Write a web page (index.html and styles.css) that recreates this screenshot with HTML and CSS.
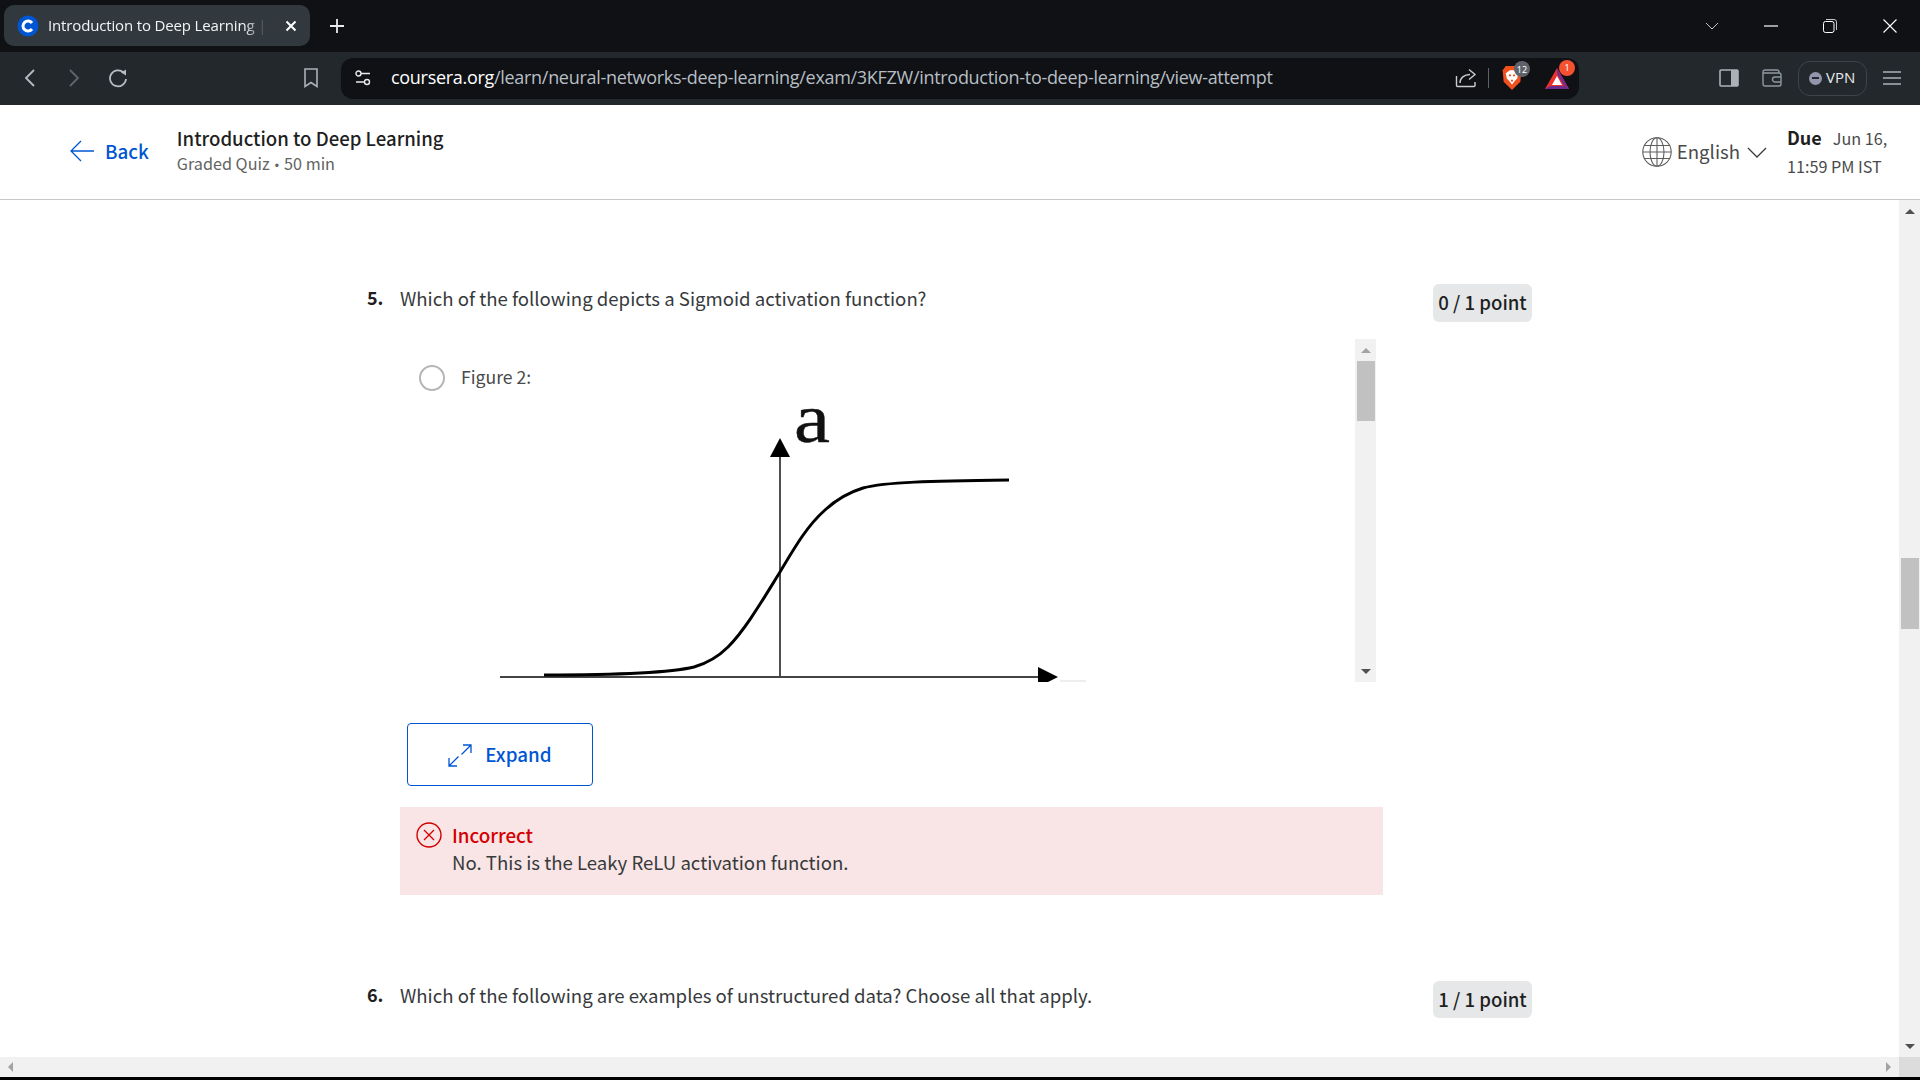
FILE: index.html
```html
<!DOCTYPE html>
<html lang="en">
<head>
    <meta charset="UTF-8">
    <meta name="viewport" content="width=device-width, initial-scale=1.0">
    <title>Introduction to Deep Learning</title>
    <link rel="stylesheet" href="styles.css">
</head>
<body>
    <div class="tabstrip">
        <div class="tab">
            <svg class="favicon" width="22" height="22" viewBox="0 0 22 22">
                <circle cx="11" cy="11" r="10.5" fill="#0056d2"/>
                <path d="M15 8a5 5 0 1 0 0 6" fill="none" stroke="#fff" stroke-width="3"/>
            </svg>
            <span class="tab-title">Introduction to Deep Learning | Coursera</span>
            <svg class="tab-close" width="12" height="12" viewBox="0 0 12 12">
                <path d="M1.500 1.500l9 9M10.500 1.500l-9 9" stroke="#fff" stroke-width="2"/>
            </svg>
        </div>
        <svg class="new-tab" width="16" height="16" viewBox="0 0 16 16">
            <path d="M8 1v14M1 8h14" stroke="#e8eaed" stroke-width="1.800"/>
        </svg>
        <div class="window-controls">
            <svg class="win-list" width="14" height="8" viewBox="0 0 14 8"><path d="M1 1l6 6 6-6" fill="none" stroke="#c4c7cc" stroke-width="1"/></svg>
            <svg class="win-min" width="14" height="2" viewBox="0 0 14 2"><path d="M0 1h14" stroke="#fff" stroke-width="1.200"/></svg>
            <svg class="win-max" width="14" height="14" viewBox="0 0 14 14"><rect x="0.500" y="2.500" width="10.500" height="11" rx="2" fill="none" stroke="#fff"/><path d="M3 .5h8a2.500 2.500 0 0 1 2.500 2.500v8" fill="none" stroke="#c4c7cc"/></svg>
            <svg class="win-close" width="14" height="14" viewBox="0 0 14 14"><path d="M.5.5l13 13M13.500.5l-13 13" stroke="#fff" stroke-width="1.100"/></svg>
        </div>
    </div>

    <div class="toolbar">
        <svg class="tool-back" width="12" height="20" viewBox="0 0 12 20"><path d="M10 2L2 10l8 8" fill="none" stroke="#b5bcc2" stroke-width="1.800"/></svg>
        <svg class="tool-forward" width="12" height="20" viewBox="0 0 12 20"><path d="M2 2l8 8-8 8" fill="none" stroke="#5d666d" stroke-width="1.800"/></svg>
        <svg class="tool-reload" width="22" height="20" viewBox="0 0 22 20"><path d="M16.500 4.500A8 8 0 1 0 19 11" fill="none" stroke="#b5bcc2" stroke-width="1.800"/><path d="M14 4.500l5-3v6z" fill="#b5bcc2"/></svg>
        <svg class="tool-bookmark" width="16" height="20" viewBox="0 0 16 20"><path d="M2 1h12v17.500l-6-4-6 4z" fill="none" stroke="#aab2b8" stroke-width="1.600"/></svg>
        <div class="urlbar">
            <svg class="site-settings" width="16" height="16" viewBox="0 0 16 16">
                <circle cx="3.500" cy="3.500" r="2.500" fill="none" stroke="#e8eaed" stroke-width="1.400"/>
                <circle cx="12" cy="12" r="2.500" fill="none" stroke="#e8eaed" stroke-width="1.400"/>
                <path d="M6 3.500h9M1 12h8.500" stroke="#e8eaed" stroke-width="1.400"/>
            </svg>
            <span class="url"><span class="url-host">coursera.org</span>/learn/neural-networks-deep-learning/exam/3KFZW/introduction-to-deep-learning/view-attempt</span>
            <svg class="share" width="22" height="20" viewBox="0 0 22 20"><path d="M1.500 8v9.500a1 1 0 0 0 1 1h16.500a1 1 0 0 0 1-1V14M5 15c0-5 4-8.500 10-8.500M14 1.500l6 5-6 5" fill="none" stroke="#c9ccd0" stroke-width="1.400"/></svg>
            <span class="url-sep"></span>
            <span class="shield">
                <svg width="22" height="26" viewBox="0 0 20 25">
                    <path d="M4 1h12l3 4-1 11-8 8-8-8L1 5z" fill="#f1501f"/>
                    <path d="M4 8l4-3h4l4 3-1 5-3 3-2 3-2-3-3-3z" fill="#fff"/>
                    <path d="M7 10h2M11 10h2M9 15h2" stroke="#f1501f" stroke-width="1.500"/>
                </svg>
                <span class="shield-count">12</span>
            </span>
            <span class="rewards">
                <svg width="26" height="23" viewBox="0 0 26 23">
                    <path d="M13 1L25 22H1z" fill="#e8322b"/>
                    <path d="M1 22l5-3h14l5 3z" fill="#6b2d8f"/>
                    <path d="M13 1l12 21-5-3-7-12z" fill="#7a2b8e"/>
                    <path d="M13 9l5 9H8z" fill="#fff"/>
                </svg>
                <span class="rewards-count">1</span>
            </span>
        </div>
        <svg class="tool-sidebar" width="20" height="18" viewBox="0 0 20 18"><rect x="1" y="1" width="18" height="16" rx="1" fill="none" stroke="#aab2b8" stroke-width="1.600"/><rect x="12" y="1" width="7" height="16" fill="#aab2b8"/></svg>
        <svg class="tool-wallet" width="20" height="18" viewBox="0 0 20 18"><path d="M1 5V3a2 2 0 0 1 2-2h12a2 2 0 0 1 2 2v1M1 4h16a2 2 0 0 1 2 2v9a2 2 0 0 1-2 2H3a2 2 0 0 1-2-2zM19 8h-6a2 2 0 0 0 0 5h6" fill="none" stroke="#8f989f" stroke-width="1.400"/></svg>
        <div class="vpn"><span class="vpn-dot"></span><span class="vpn-label">VPN</span></div>
        <svg class="tool-menu" width="18" height="14" viewBox="0 0 18 14"><path d="M0 1h18M0 7h18M0 13h18" stroke="#aab2b8" stroke-width="1.500"/></svg>
    </div>

    <header class="quiz-header">
        <a class="back-link">
            <svg width="24" height="22" viewBox="0 0 24 22"><path d="M11 1L1 11l10 10M1 11h23" fill="none" stroke="#0056d2" stroke-width="1.300"/></svg>
            Back
        </a>
        <div class="quiz-title">
            <div class="quiz-name">Introduction to Deep Learning</div>
            <div class="quiz-meta">Graded Quiz <span class="meta-dot">•</span> 50 min</div>
        </div>
        <div class="language">
            <svg width="30" height="30" viewBox="0 0 30 30" fill="none" stroke="#5f5f5f" stroke-width="1.100">
                <circle cx="15" cy="15" r="14.200"/>
                <ellipse cx="15" cy="15" rx="7" ry="14.200"/>
                <path d="M15 1v28M1 15h28M3 8.500h24M3 21.500h24"/>
            </svg>
            <span class="language-name">English</span>
            <svg width="20" height="11" viewBox="0 0 20 11"><path d="M1 1l9 9 9-9" fill="none" stroke="#373a3c" stroke-width="1.300"/></svg>
        </div>
        <div class="due">
            <div><strong>Due</strong><span class="due-date">Jun 16,</span></div>
            <div>11:59 PM IST</div>
        </div>
    </header>

    <div class="viewport">
        <main class="content">
            <section class="question">
                <div class="q-number">5.</div>
                <div class="q-body">
                    <div class="q-prompt">Which of the following depicts a Sigmoid activation function?</div>
                    <div class="option-box">
                        <div class="option-scroll">
                            <label class="option"><span class="radio"></span><span class="option-text">Figure 2:</span></label>
                            <svg class="figure" width="955" height="307" viewBox="400 375 955 307">
                                <text class="figure-label" x="794" y="442" textLength="36" lengthAdjust="spacingAndGlyphs">a</text>
                                <path d="M780 677V455" stroke="#222" stroke-width="1.600"/>
                                <path d="M780 438l-10 19h20z" fill="#000"/>
                                <path d="M500 677H1040" stroke="#444" stroke-width="2"/>
                                <path d="M1038 667l20 10-20 10z" fill="#000"/>
                                <path d="M1060 681h26" stroke="#ddd" stroke-width="1"/>
                                <path d="M544 675C600 675 665 674 694 667C708 663 718 657 728 647C745 630 762 601 780 572C796 545 808 525 825 510C838 498 850 492 863 488C885 482 930 481 1009 480" fill="none" stroke="#000" stroke-width="3"/>
                            </svg>
                        </div>
                        <div class="scroll-track inner-track">
                            <span class="arrow-up faded"></span>
                            <span class="scroll-thumb inner-thumb"></span>
                            <span class="arrow-down"></span>
                        </div>
                    </div>
                    <button class="expand-btn">
                        <svg width="24" height="23" viewBox="0 0 24 23"><path d="M23 1l-9.500 9.500M10.500 12.500L1 22M15 1h8v8M1 14v8h8" fill="none" stroke="#0056d2" stroke-width="1.300"/></svg>
                        Expand
                    </button>
                    <div class="feedback">
                        <svg class="feedback-icon" width="26" height="26" viewBox="0 0 26 26"><circle cx="13" cy="13" r="12" fill="none" stroke="#d30001" stroke-width="1.400"/><path d="M8 8l10 10M18 8L8 18" stroke="#d30001" stroke-width="1.300"/></svg>
                        <div class="feedback-copy">
                            <div class="feedback-title">Incorrect</div>
                            <div class="feedback-text">No. This is the Leaky ReLU activation function.</div>
                        </div>
                    </div>
                </div>
                <div class="points">0 / 1 point</div>
            </section>

            <section class="question next-question">
                <div class="q-number">6.</div>
                <div class="q-body">
                    <div class="q-prompt">Which of the following are examples of unstructured data? Choose all that apply.</div>
                </div>
                <div class="points">1 / 1 point</div>
            </section>
        </main>
        <div class="scroll-track page-track">
            <span class="arrow-up dark"></span>
            <span class="scroll-thumb page-thumb"></span>
            <span class="arrow-down"></span>
        </div>
    </div>

    <div class="hscroll">
        <div class="hscroll-track">
            <span class="arrow-left"></span>
            <span class="arrow-right"></span>
        </div>
        <div class="hscroll-corner"></div>
    </div>
    <div class="taskbar-edge"></div>
</body>
</html>
```

FILE: styles.css
```css
* {
    box-sizing: border-box;
}

html, body {
    height: 100%;
}

body {
    margin: 0;
    display: flex;
    flex-direction: column;
    height: 100vh;
    overflow: hidden;
    background-color: white;
    font-family: "Noto Sans CJK SC", "Noto Sans", sans-serif;
    color: #373a3c;
}

/* browser chrome */
.tabstrip {
    display: flex;
    align-items: center;
    height: 52px;
    padding: 0 4px 1px;
    background-color: #0f1115;
}

.tab {
    display: flex;
    align-items: center;
    width: 306px;
    height: 41px;
    padding: 0 13px;
    border-radius: 10px;
    background-color: #32393e;
    color: #f1f3f4;
}

.favicon {
    flex: none;
    margin-right: 9px;
}

.tab-title {
    width: 223px;
    margin-top: -2px;
    overflow: hidden;
    white-space: nowrap;
    font-family: "Open Sans", sans-serif;
    font-size: 15px;
    letter-spacing: -0.15px;
    -webkit-mask-image: linear-gradient(to right, black 88%, transparent 98%);
    mask-image: linear-gradient(to right, black 88%, transparent 98%);
}

.tab-close {
    margin-left: 14px;
}

.new-tab {
    margin-left: 19px;
}

.window-controls {
    display: flex;
    align-items: center;
    margin-left: auto;
    margin-right: 19px;
}

.win-list {
    margin-right: 45px;
}

.win-min {
    margin-right: 45px;
}

.win-max {
    margin-right: 46px;
}

.toolbar {
    display: flex;
    align-items: center;
    height: 53px;
    padding: 0 0 1px 24px;
    background-color: #23282c;
}

.tool-forward {
    margin-left: 32px;
}

.tool-reload {
    margin-left: 27px;
}

.tool-bookmark {
    margin-left: 174px;
}

.urlbar {
    display: flex;
    align-items: center;
    width: 1238px;
    height: 41px;
    margin-left: 22px;
    padding-left: 14px;
    border-radius: 12px;
    background-color: #0f1115;
}

.url {
    width: 1061px;
    margin-left: 20px;
    margin-top: -2px;
    white-space: nowrap;
    font-family: "Open Sans", sans-serif;
    font-size: 18px;
    letter-spacing: -0.3px;
    color: #b7bec4;
}

.url-host {
    color: #fff;
}

.share {
    margin-left: 3px;
}

.url-sep {
    width: 1px;
    height: 20px;
    margin-left: 11px;
    background-color: #5b6268;
}

.shield {
    position: relative;
    display: flex;
    margin-left: 12px;
}

.shield-count,
.rewards-count {
    position: absolute;
    display: flex;
    align-items: center;
    justify-content: center;
    border-radius: 50%;
    font-family: "Noto Sans", sans-serif;
    color: white;
}

.shield-count {
    top: -4px;
    left: 13px;
    width: 16px;
    height: 16px;
    background-color: #5f626b;
    font-size: 9px;
}

.rewards {
    position: relative;
    display: flex;
    margin-left: 21px;
}

.rewards-count {
    top: -7px;
    left: 15px;
    width: 16px;
    height: 16px;
    background-color: #f5502f;
    font-size: 9px;
}

.tool-sidebar {
    margin-left: 140px;
}

.tool-wallet {
    margin-left: 23px;
}

.vpn {
    display: flex;
    align-items: center;
    width: 69px;
    height: 35px;
    margin-left: 16px;
    padding-left: 10px;
    border: 1px solid #3c444a;
    border-radius: 12px;
    font-family: "Open Sans", sans-serif;
    font-size: 15px;
    color: #e8eaed;
}

.vpn-label {
    margin-top: -2px;
}

.vpn-dot {
    position: relative;
    width: 13px;
    height: 13px;
    margin-right: 4px;
    border-radius: 50%;
    background-color: #9196ac;
}

.vpn-dot::after {
    content: "";
    position: absolute;
    top: 5.5px;
    left: 3px;
    width: 7px;
    height: 2px;
    background-color: #23282c;
}

.tool-menu {
    margin-left: 16px;
}

/* quiz header */
.quiz-header {
    display: flex;
    align-items: center;
    height: 95px;
    padding: 0 17px 0 70px;
    border-bottom: 1px solid #c8c8c8;
}

.back-link {
    display: flex;
    align-items: center;
    gap: 11px;
    margin-top: -4px;
    font-size: 18.8px;
    font-weight: 500;
    color: #0056d2;
}

.back-link svg {
    margin-top: 2px;
}

.quiz-title {
    margin-left: 28px;
    margin-top: -2px;
}

.quiz-name {
    font-size: 18.6px;
    line-height: 26px;
    font-weight: 500;
    color: #1f1f1f;
}

.quiz-meta {
    font-size: 16.2px;
    line-height: 24px;
    color: #636363;
}

.meta-dot {
    font-family: "Liberation Sans", sans-serif;
    font-size: 12px;
    margin: 0 1.5px;
}

.language {
    display: flex;
    align-items: center;
    margin-left: auto;
    font-size: 18.6px;
    color: #4a4a4a;
}

.language-name {
    margin: -4px 7px 0 5px;
}

.due {
    flex: none;
    width: 116px;
    margin-left: 20px;
    margin-top: -2px;
    font-size: 16.2px;
    line-height: 28px;
    white-space: nowrap;
    color: #4a4a4a;
}

.due strong {
    font-size: 18px;
    font-weight: 600;
    color: #1f1f1f;
}

.due-date {
    margin-left: 11px;
}

/* page body */
.viewport {
    display: flex;
    flex: 1;
    min-height: 0;
}

.content {
    flex: 1;
    padding: 84px 0 0 367px;
    overflow: hidden;
}

.question {
    display: flex;
    align-items: flex-start;
}

.next-question {
    margin-top: 86px;
}

.q-number {
    width: 33px;
    font-size: 18px;
    line-height: 26px;
    font-weight: 600;
    color: #1f1f1f;
}

.q-body {
    width: 983px;
}

.q-prompt {
    font-size: 18.6px;
    line-height: 27px;
}

.points {
    width: 99px;
    height: 38px;
    margin-left: 50px;
    border-radius: 6px;
    background-color: #e5e7e8;
    font-size: 18.6px;
    font-weight: 500;
    line-height: 36px;
    text-align: center;
    color: #1f1f1f;
}

.next-question .points {
    height: 37px;
    line-height: 36px;
}

.option-box {
    display: flex;
    width: 976px;
    height: 343px;
    margin-top: 28px;
}

.option-scroll {
    flex: 1;
    padding-top: 26px;
    overflow: hidden;
}

.option {
    display: flex;
    align-items: center;
    gap: 16px;
    height: 26px;
    margin-left: 19px;
    margin-bottom: -16px;
    font-size: 17.6px;
    color: #4a4a4a;
}

.option-text {
    margin-top: -4px;
}

.radio {
    width: 26px;
    height: 26px;
    border: 2px solid #b5b5b5;
    border-radius: 50%;
}

.figure {
    display: block;
}

.figure-label {
    font-family: "Liberation Serif", serif;
    font-size: 70px;
    fill: #111;
    stroke: #111;
    stroke-width: 0.4px;
}

.expand-btn {
    display: flex;
    align-items: center;
    justify-content: center;
    gap: 13px;
    width: 186px;
    height: 63px;
    margin: 41px 0 0 7px;
    padding-bottom: 4px;
    border: 1px solid #0056d2;
    border-radius: 4px;
    background-color: white;
    font-family: inherit;
    font-size: 18.8px;
    font-weight: 500;
    color: #0056d2;
}

.expand-btn svg {
    margin-top: 4px;
}

.feedback {
    display: flex;
    align-items: flex-start;
    height: 88px;
    margin-top: 21px;
    padding: 15px 0 0 16px;
    background-color: #f9e5e5;
}

.feedback-icon {
    flex: none;
    margin-right: 10px;
}

.feedback-copy {
    margin-top: -1px;
}

.feedback-title {
    font-size: 18.8px;
    line-height: 27px;
    font-weight: 500;
    color: #d30001;
}

.feedback-text {
    font-size: 18.6px;
    line-height: 28px;
}

/* scrollbars */
.scroll-track {
    display: flex;
    flex-direction: column;
    align-items: center;
    width: 21px;
    background-color: #f1f1f1;
}

.inner-thumb {
    height: 60px;
    margin-top: 8px;
}

.page-track {
    padding: 9px 0 8px;
}

.scroll-thumb {
    display: block;
    width: 18px;
    background-color: #c1c1c1;
}

.page-thumb {
    height: 71px;
    margin-top: 344px;
}

.inner-track {
    height: 343px;
    padding: 9px 0 8px;
}

.arrow-down {
    margin-top: auto;
}

.arrow-up {
    width: 0;
    height: 0;
    border-left: 5px solid transparent;
    border-right: 5px solid transparent;
    border-bottom: 5px solid #a3a3a3;
}

.arrow-up.dark {
    border-bottom-color: #505050;
}

.arrow-down {
    width: 0;
    height: 0;
    border-left: 5px solid transparent;
    border-right: 5px solid transparent;
    border-top: 5px solid #505050;
}

.hscroll {
    display: flex;
    height: 20px;
    flex: none;
}

.hscroll-track {
    display: flex;
    align-items: center;
    justify-content: space-between;
    flex: 1;
    padding: 0 8px;
    background-color: #f1f1f1;
}

.hscroll-corner {
    width: 21px;
    background-color: #dcdcdc;
}

.arrow-left,
.arrow-right {
    width: 0;
    height: 0;
    border-top: 5px solid transparent;
    border-bottom: 5px solid transparent;
}

.arrow-left {
    border-right: 5px solid #a3a3a3;
}

.arrow-right {
    border-left: 5px solid #a3a3a3;
}

.taskbar-edge {
    height: 3px;
    flex: none;
    background-color: #000;
}
```
